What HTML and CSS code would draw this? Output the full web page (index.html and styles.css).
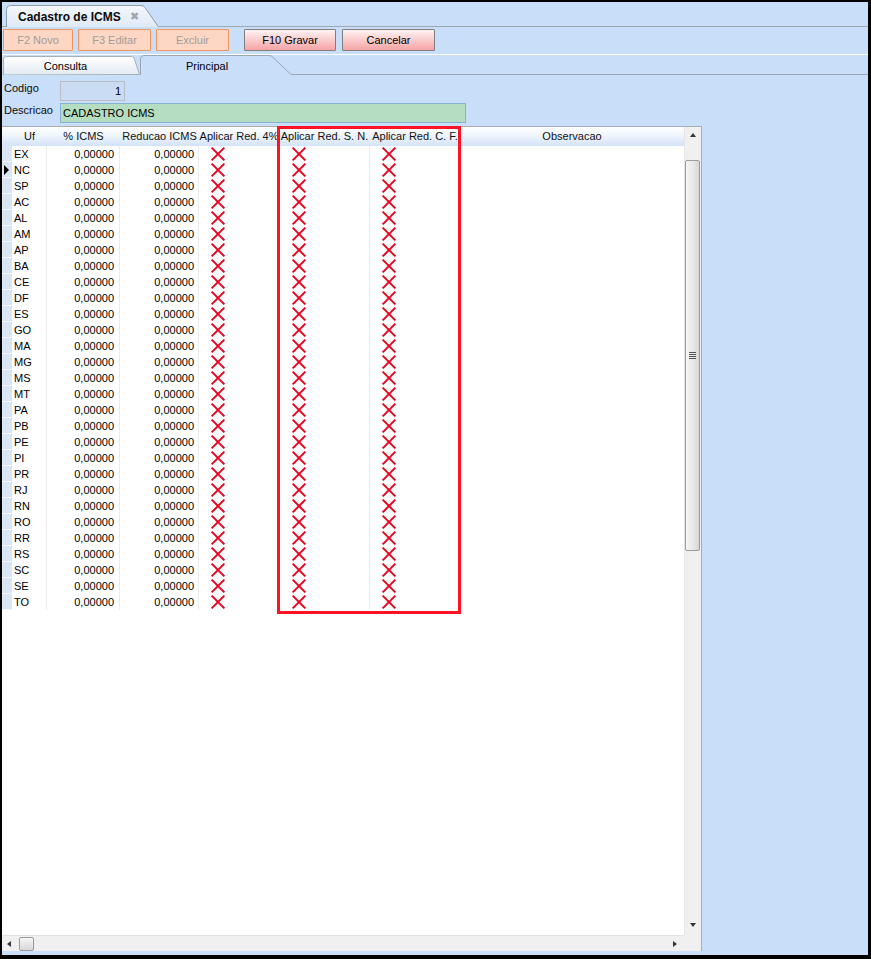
FILE: index.html
```html
<!DOCTYPE html>
<html lang="pt">
<head>
<meta charset="utf-8">
<title>Cadastro de ICMS</title>
<link rel="stylesheet" href="styles.css">
</head>
<body>
<div class="frame">
  <div class="doc-tabs">
    <div class="doc-tab">
      <svg class="tab-shape" viewBox="0 0 153 22" preserveAspectRatio="none">
        <defs>
          <linearGradient id="tg" x1="0" y1="0" x2="0" y2="1">
            <stop offset="0" stop-color="#f4f8fd"/>
            <stop offset="1" stop-color="#dfe9f6"/>
          </linearGradient>
        </defs>
        <path d="M0.5,22 L0.5,4.5 Q0.5,0.5 4.5,0.5 L135,0.5 Q137.5,0.5 139,2.5 L152.5,22 Z" fill="url(#tg)" stroke="#8f9caa"/>
        <rect x="1" y="21" width="151" height="1" fill="#dfe9f6"/>
      </svg>
      <span class="doc-title">Cadastro de ICMS</span>
      <span class="doc-close">&#x2716;</span>
    </div>
  </div>

  <div class="toolbar">
    <button class="btn off b1">F2 Novo</button>
    <button class="btn off b2">F3 Editar</button>
    <button class="btn off b3">Excluir</button>
    <button class="btn on b4">F10 Gravar</button>
    <button class="btn on b5">Cancelar</button>
  </div>

  <div class="sub-tabs">
    <div class="sub-tab consulta">
      <svg class="tab-shape" viewBox="0 0 137 20" preserveAspectRatio="none">
        <defs>
          <linearGradient id="cg" x1="0" y1="0" x2="0" y2="1">
            <stop offset="0" stop-color="#ffffff"/>
            <stop offset="1" stop-color="#e3eaf3"/>
          </linearGradient>
        </defs>
        <path d="M0.5,20 L0.5,4 Q0.5,1.5 3.5,1.5 L128,1.5 Q130,1.5 131,3 L136.5,19.5 Z" fill="url(#cg)" stroke="#a4afbb"/>
      </svg>
      <span class="sub-label">Consulta</span>
    </div>
    <div class="sub-tab principal">
      <svg class="tab-shape" viewBox="0 0 152 20" preserveAspectRatio="none">
        <path d="M0.5,20 L0.5,4 Q0.5,0.5 4,0.5 L129,0.5 Q131.5,0.5 133,2.5 L150,18.5 Q151,19.5 152,19.5" fill="#c9def8" stroke="#9aa6b3"/>
      </svg>
      <span class="sub-label">Principal</span>
    </div>
    <div class="sub-fill"></div>
  </div>

  <div class="form">
    <div class="form-row">
      <span class="lbl">Codigo</span>
      <div class="inp code">1</div>
    </div>
    <div class="form-row">
      <span class="lbl">Descricao</span>
      <div class="inp desc">CADASTRO ICMS</div>
    </div>
  </div>

  <div class="grid">
    <div class="grid-main">
      <div class="hdr">
        <span class="h-ind"></span>
        <span>Uf</span>
        <span>% ICMS</span>
        <span>Reducao ICMS</span>
        <span>Aplicar Red. 4%</span>
        <span>Aplicar Red. S. N.</span>
        <span>Aplicar Red. C. F.</span>
        <span>Observacao</span>
      </div>
      <div class="rows">
        <div class="row"><span class="ind"></span><span class="uf">EX</span><span class="num">0,00000</span><span class="num n2">0,00000</span><span class="chk"><i class="x"></i></span><span class="chk c2"><i class="x"></i></span><span class="chk"><i class="x"></i></span><span class="obs"></span></div>
        <div class="row"><span class="ind cur"></span><span class="uf">NC</span><span class="num">0,00000</span><span class="num n2">0,00000</span><span class="chk"><i class="x"></i></span><span class="chk c2"><i class="x"></i></span><span class="chk"><i class="x"></i></span><span class="obs"></span></div>
        <div class="row"><span class="ind"></span><span class="uf">SP</span><span class="num">0,00000</span><span class="num n2">0,00000</span><span class="chk"><i class="x"></i></span><span class="chk c2"><i class="x"></i></span><span class="chk"><i class="x"></i></span><span class="obs"></span></div>
        <div class="row"><span class="ind"></span><span class="uf">AC</span><span class="num">0,00000</span><span class="num n2">0,00000</span><span class="chk"><i class="x"></i></span><span class="chk c2"><i class="x"></i></span><span class="chk"><i class="x"></i></span><span class="obs"></span></div>
        <div class="row"><span class="ind"></span><span class="uf">AL</span><span class="num">0,00000</span><span class="num n2">0,00000</span><span class="chk"><i class="x"></i></span><span class="chk c2"><i class="x"></i></span><span class="chk"><i class="x"></i></span><span class="obs"></span></div>
        <div class="row"><span class="ind"></span><span class="uf">AM</span><span class="num">0,00000</span><span class="num n2">0,00000</span><span class="chk"><i class="x"></i></span><span class="chk c2"><i class="x"></i></span><span class="chk"><i class="x"></i></span><span class="obs"></span></div>
        <div class="row"><span class="ind"></span><span class="uf">AP</span><span class="num">0,00000</span><span class="num n2">0,00000</span><span class="chk"><i class="x"></i></span><span class="chk c2"><i class="x"></i></span><span class="chk"><i class="x"></i></span><span class="obs"></span></div>
        <div class="row"><span class="ind"></span><span class="uf">BA</span><span class="num">0,00000</span><span class="num n2">0,00000</span><span class="chk"><i class="x"></i></span><span class="chk c2"><i class="x"></i></span><span class="chk"><i class="x"></i></span><span class="obs"></span></div>
        <div class="row"><span class="ind"></span><span class="uf">CE</span><span class="num">0,00000</span><span class="num n2">0,00000</span><span class="chk"><i class="x"></i></span><span class="chk c2"><i class="x"></i></span><span class="chk"><i class="x"></i></span><span class="obs"></span></div>
        <div class="row"><span class="ind"></span><span class="uf">DF</span><span class="num">0,00000</span><span class="num n2">0,00000</span><span class="chk"><i class="x"></i></span><span class="chk c2"><i class="x"></i></span><span class="chk"><i class="x"></i></span><span class="obs"></span></div>
        <div class="row"><span class="ind"></span><span class="uf">ES</span><span class="num">0,00000</span><span class="num n2">0,00000</span><span class="chk"><i class="x"></i></span><span class="chk c2"><i class="x"></i></span><span class="chk"><i class="x"></i></span><span class="obs"></span></div>
        <div class="row"><span class="ind"></span><span class="uf">GO</span><span class="num">0,00000</span><span class="num n2">0,00000</span><span class="chk"><i class="x"></i></span><span class="chk c2"><i class="x"></i></span><span class="chk"><i class="x"></i></span><span class="obs"></span></div>
        <div class="row"><span class="ind"></span><span class="uf">MA</span><span class="num">0,00000</span><span class="num n2">0,00000</span><span class="chk"><i class="x"></i></span><span class="chk c2"><i class="x"></i></span><span class="chk"><i class="x"></i></span><span class="obs"></span></div>
        <div class="row"><span class="ind"></span><span class="uf">MG</span><span class="num">0,00000</span><span class="num n2">0,00000</span><span class="chk"><i class="x"></i></span><span class="chk c2"><i class="x"></i></span><span class="chk"><i class="x"></i></span><span class="obs"></span></div>
        <div class="row"><span class="ind"></span><span class="uf">MS</span><span class="num">0,00000</span><span class="num n2">0,00000</span><span class="chk"><i class="x"></i></span><span class="chk c2"><i class="x"></i></span><span class="chk"><i class="x"></i></span><span class="obs"></span></div>
        <div class="row"><span class="ind"></span><span class="uf">MT</span><span class="num">0,00000</span><span class="num n2">0,00000</span><span class="chk"><i class="x"></i></span><span class="chk c2"><i class="x"></i></span><span class="chk"><i class="x"></i></span><span class="obs"></span></div>
        <div class="row"><span class="ind"></span><span class="uf">PA</span><span class="num">0,00000</span><span class="num n2">0,00000</span><span class="chk"><i class="x"></i></span><span class="chk c2"><i class="x"></i></span><span class="chk"><i class="x"></i></span><span class="obs"></span></div>
        <div class="row"><span class="ind"></span><span class="uf">PB</span><span class="num">0,00000</span><span class="num n2">0,00000</span><span class="chk"><i class="x"></i></span><span class="chk c2"><i class="x"></i></span><span class="chk"><i class="x"></i></span><span class="obs"></span></div>
        <div class="row"><span class="ind"></span><span class="uf">PE</span><span class="num">0,00000</span><span class="num n2">0,00000</span><span class="chk"><i class="x"></i></span><span class="chk c2"><i class="x"></i></span><span class="chk"><i class="x"></i></span><span class="obs"></span></div>
        <div class="row"><span class="ind"></span><span class="uf">PI</span><span class="num">0,00000</span><span class="num n2">0,00000</span><span class="chk"><i class="x"></i></span><span class="chk c2"><i class="x"></i></span><span class="chk"><i class="x"></i></span><span class="obs"></span></div>
        <div class="row"><span class="ind"></span><span class="uf">PR</span><span class="num">0,00000</span><span class="num n2">0,00000</span><span class="chk"><i class="x"></i></span><span class="chk c2"><i class="x"></i></span><span class="chk"><i class="x"></i></span><span class="obs"></span></div>
        <div class="row"><span class="ind"></span><span class="uf">RJ</span><span class="num">0,00000</span><span class="num n2">0,00000</span><span class="chk"><i class="x"></i></span><span class="chk c2"><i class="x"></i></span><span class="chk"><i class="x"></i></span><span class="obs"></span></div>
        <div class="row"><span class="ind"></span><span class="uf">RN</span><span class="num">0,00000</span><span class="num n2">0,00000</span><span class="chk"><i class="x"></i></span><span class="chk c2"><i class="x"></i></span><span class="chk"><i class="x"></i></span><span class="obs"></span></div>
        <div class="row"><span class="ind"></span><span class="uf">RO</span><span class="num">0,00000</span><span class="num n2">0,00000</span><span class="chk"><i class="x"></i></span><span class="chk c2"><i class="x"></i></span><span class="chk"><i class="x"></i></span><span class="obs"></span></div>
        <div class="row"><span class="ind"></span><span class="uf">RR</span><span class="num">0,00000</span><span class="num n2">0,00000</span><span class="chk"><i class="x"></i></span><span class="chk c2"><i class="x"></i></span><span class="chk"><i class="x"></i></span><span class="obs"></span></div>
        <div class="row"><span class="ind"></span><span class="uf">RS</span><span class="num">0,00000</span><span class="num n2">0,00000</span><span class="chk"><i class="x"></i></span><span class="chk c2"><i class="x"></i></span><span class="chk"><i class="x"></i></span><span class="obs"></span></div>
        <div class="row"><span class="ind"></span><span class="uf">SC</span><span class="num">0,00000</span><span class="num n2">0,00000</span><span class="chk"><i class="x"></i></span><span class="chk c2"><i class="x"></i></span><span class="chk"><i class="x"></i></span><span class="obs"></span></div>
        <div class="row"><span class="ind"></span><span class="uf">SE</span><span class="num">0,00000</span><span class="num n2">0,00000</span><span class="chk"><i class="x"></i></span><span class="chk c2"><i class="x"></i></span><span class="chk"><i class="x"></i></span><span class="obs"></span></div>
        <div class="row"><span class="ind"></span><span class="uf">TO</span><span class="num">0,00000</span><span class="num n2">0,00000</span><span class="chk"><i class="x"></i></span><span class="chk c2"><i class="x"></i></span><span class="chk"><i class="x"></i></span><span class="obs"></span></div>
      </div>
    </div>
    <div class="vscroll">
      <span class="arrow up"></span>
      <div class="vtrack">
        <div class="vthumb"><span class="grip"></span></div>
      </div>
      <span class="arrow down"></span>
    </div>
    <div class="hscroll">
      <span class="arrow left"></span>
      <div class="hthumb"></div>
      <div class="hspace"></div>
      <span class="arrow right"></span>
    </div>
    <div class="corner"></div>
  </div>

  <div class="highlight"></div>
</div>
</body>
</html>
```

FILE: styles.css
```css
* { box-sizing: border-box; }

html, body {
  margin: 0;
  padding: 0;
  background: #000;
}

body {
  font-family: "Liberation Sans", Arial, sans-serif;
  font-size: 11px;
  color: #000;
}

.frame {
  position: relative;
  width: 871px;
  height: 959px;
  border-top: 2px solid #000;
  border-left: 2px solid #000;
  border-right: 3px solid #000;
  border-bottom: 4px solid #000;
  background: #c9def8;
  display: flex;
  flex-direction: column;
}

/* document tab strip */
.doc-tabs {
  height: 25px;
  display: flex;
  align-items: flex-end;
  padding-left: 4px;
  border-bottom: 1px solid #9ea8b3;
}

.doc-tab {
  position: relative;
  width: 153px;
  height: 22px;
  margin-bottom: -1px;
  display: flex;
  align-items: center;
  padding-left: 12px;
  padding-top: 1px;
}

.tab-shape {
  position: absolute;
  left: 0;
  top: 0;
  width: 100%;
  height: 100%;
}

.doc-title {
  position: relative;
  font-weight: bold;
  font-size: 12px;
  color: #0b0b0b;
}

.doc-close {
  position: relative;
  margin-left: 9px;
  font-size: 11px;
  color: #a1a6ac;
}

/* toolbar */
.toolbar {
  height: 28px;
  display: flex;
  align-items: flex-start;
  padding-top: 2px;
  padding-left: 1px;
  border-bottom: 1px solid #ffffff;
}

.btn {
  height: 22px;
  font-family: "Liberation Sans", Arial, sans-serif;
  font-size: 11px;
  padding: 0;
  border-radius: 1px;
  cursor: default;
}

.btn.off {
  background: #fdd7c4;
  border: 1px solid #f0955c;
  color: #a39c97;
}

.btn.on {
  background: linear-gradient(#fff3f3, #fbd0d0 45%, #f5a3a3);
  border: 1px solid #7f7f7f;
  color: #000;
}

.b1 { width: 70px; }
.b2 { width: 73px; margin-left: 5px; }
.b3 { width: 73px; margin-left: 5px; }
.b4 { width: 92px; margin-left: 15px; }
.b5 { width: 93px; margin-left: 6px; }

/* sub tabs */
.sub-tabs {
  height: 20px;
  display: flex;
  align-items: stretch;
  padding-left: 1px;
}

.sub-tab {
  position: relative;
  display: flex;
  align-items: center;
  justify-content: center;
  padding-top: 2px;
}

.sub-tab.consulta { width: 137px; padding-right: 12px; }
.sub-tab.principal { width: 152px; padding-right: 18px; }

.sub-label { position: relative; }

.sub-fill {
  flex: 1;
  border-bottom: 1px solid #9aa6b3;
}

/* form */
.form {
  height: 51px;
  padding-top: 6px;
  display: flex;
  flex-direction: column;
  gap: 2px;
}

.form-row {
  display: flex;
  align-items: flex-start;
  height: 20px;
}

.lbl {
  width: 58px;
  padding-left: 2px;
  padding-top: 1px;
  color: #0d0d0d;
}

.inp {
  height: 20px;
  line-height: 18px;
  font-size: 11px;
}

.inp.code {
  width: 65px;
  border: 1px solid #b9bcc2;
  background: #cadcf3;
  text-align: right;
  padding-right: 3px;
}

.inp.desc {
  width: 406px;
  border: 1px solid #86b3cf;
  background: #b5ddc1;
  padding-left: 2px;
}

/* grid */
.grid {
  flex: 1;
  margin-bottom: 4px;
  width: 700px;
  border-top: 1px solid #a9adb3;
  border-right: 1px solid #a9adb3;
  background: #fff;
  display: grid;
  grid-template-columns: 682px 17px;
  grid-template-rows: 1fr 16px;
}

.grid-main {
  overflow: hidden;
  background: #fff;
}

.hdr, .row {
  display: grid;
  grid-template-columns: 10px 35px 73px 79px 80px 91px 90px 224px;
}

.hdr {
  height: 19px;
  background: linear-gradient(#ffffff, #f1f6fd 40%, #d3e3f8);
}

.hdr span {
  text-align: center;
  line-height: 19px;
  white-space: nowrap;
  color: #111;
}

.row {
  height: 16px;
  line-height: 16px;
}

.row > span {
  border-right: 1px solid #ececec;
  white-space: nowrap;
}

.row > span.ind {
  background: #dbe6f4;
  border-right: none;
  border-bottom: 1px solid #f4f7fb;
  position: relative;
}

.ind.cur::after {
  content: "";
  position: absolute;
  left: 2px;
  top: 3px;
  border-top: 5px solid transparent;
  border-bottom: 5px solid transparent;
  border-left: 5px solid #000;
}

.uf {
  padding-left: 2px;
}

.num {
  text-align: right;
  padding-right: 5px;
}

.num.n2 { padding-right: 4px; }

.chk {
  position: relative;
}

.x {
  position: absolute;
  left: 11px;
  top: 1px;
  width: 15px;
  height: 15px;
}

.c2 .x { left: 12px; }

.x::before, .x::after {
  content: "";
  position: absolute;
  left: -1px;
  top: 6px;
  width: 18px;
  height: 2px;
  background: #e6001a;
}

.x::before { transform: rotate(45deg); }
.x::after { transform: rotate(-45deg); }

.row > span.obs { border-right: none; }

/* vertical scrollbar */
.vscroll {
  grid-row: 1;
  grid-column: 2;
  background: #f0f0f0;
  border-left: 1px solid #e6e6e6;
  display: flex;
  flex-direction: column;
  align-items: center;
}

.arrow {
  display: block;
  width: 0;
  height: 0;
}

.arrow.up {
  margin-top: 6px;
  margin-bottom: 6px;
  border-left: 3px solid transparent;
  border-right: 3px solid transparent;
  border-bottom: 4px solid #333;
}

.arrow.down {
  margin-bottom: 8px;
  border-left: 3px solid transparent;
  border-right: 3px solid transparent;
  border-top: 4px solid #333;
}

.vtrack {
  flex: 1;
  width: 100%;
  padding-top: 17px;
}

.vthumb {
  width: 15px;
  height: 391px;
  margin-left: 0;
  border: 1px solid #9c9c9c;
  border-radius: 2px;
  background: linear-gradient(90deg, #f6f6f6, #e9e9e9 50%, #d6d6d6);
  display: flex;
  align-items: center;
  justify-content: center;
}

.grip {
  width: 7px;
  height: 7px;
  background: repeating-linear-gradient(#555 0 1px, transparent 1px 2px);
}

/* horizontal scrollbar */
.hscroll {
  grid-row: 2;
  grid-column: 1;
  background: #f0f0f0;
  border-top: 1px solid #e2e2e2;
  display: flex;
  align-items: center;
}

.arrow.left {
  margin-left: 5px;
  border-top: 3px solid transparent;
  border-bottom: 3px solid transparent;
  border-right: 4px solid #333;
}

.hthumb {
  width: 15px;
  height: 14px;
  margin-left: 8px;
  border: 1px solid #9c9c9c;
  border-radius: 2px;
  background: linear-gradient(#f6f6f6, #d8d8d8);
}

.hspace { flex: 1; }

.arrow.right {
  margin-right: 7px;
  border-top: 3px solid transparent;
  border-bottom: 3px solid transparent;
  border-left: 4px solid #333;
}

.corner {
  grid-row: 2;
  grid-column: 2;
  background: #f0f0f0;
}

/* annotation overlay */
.highlight {
  position: absolute;
  left: 275px;
  top: 124px;
  width: 184px;
  height: 488px;
  border: 3px solid #fe1224;
  pointer-events: none;
}
```
